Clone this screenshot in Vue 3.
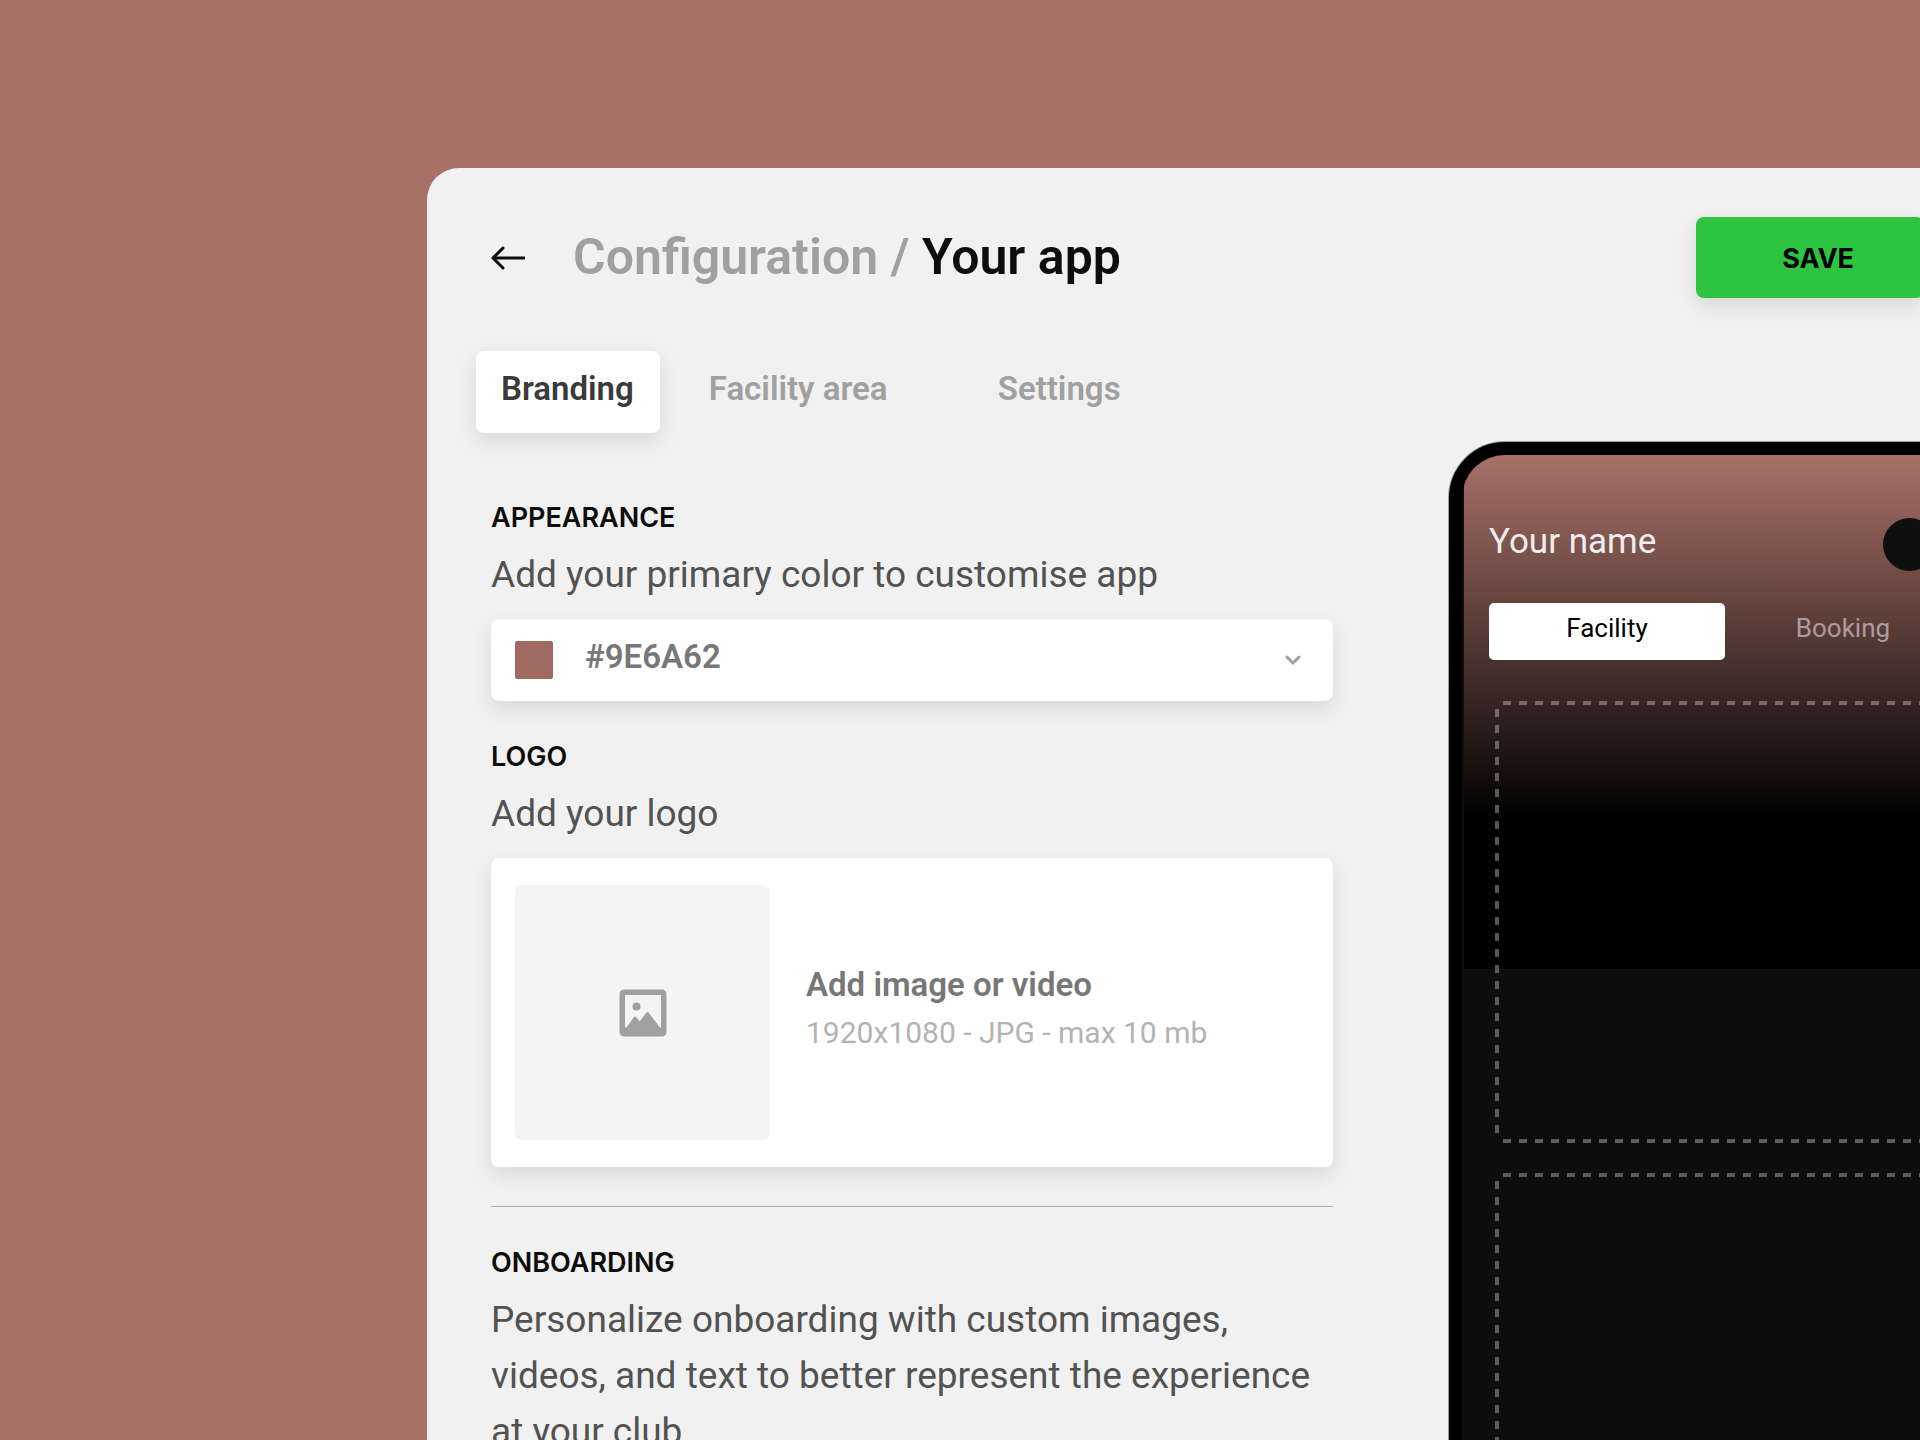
<script setup>
import { ref } from 'vue'

const tabs = [
  { id: 'branding', label: 'Branding' },
  { id: 'facility', label: 'Facility area' },
  { id: 'settings', label: 'Settings' },
]
const activeTab = ref('branding')

const previewTabs = ['Facility', 'Booking']
const activePreview = ref('Facility')

const color = ref('#9E6A62')
</script>

<template>
  <div class="page">
    <main class="panel">
      <header class="header">
        <button class="back" type="button" aria-label="Back">
          <svg viewBox="0 0 34 24" width="34" height="24" fill="none" stroke="#0d0d0d" stroke-width="3">
            <path d="M2 12H34" />
            <path d="M12 2 2 12l10 10" stroke-linecap="round" stroke-linejoin="round" />
          </svg>
        </button>
        <h1 class="title">
          <a href="#configuration">Configuration</a>
          <span class="slash"> / </span>
          <span>Your app</span>
        </h1>
        <button class="save" type="button">SAVE</button>
      </header>

      <div class="columns">
        <div class="form">
          <nav class="tabs">
            <button
              v-for="tab in tabs"
              :key="tab.id"
              type="button"
              class="tab"
              :class="[tab.id, { active: tab.id === activeTab }]"
              @click="activeTab = tab.id"
            >{{ tab.label }}</button>
          </nav>

          <section class="group">
            <h2>APPEARANCE</h2>
            <label class="text" for="color">Add your primary color to customise app</label>
            <div class="field card">
              <span class="swatch" :style="{ background: color }"></span>
              <select id="color" v-model="color">
                <option>#9E6A62</option>
              </select>
              <svg class="chevron" viewBox="0 0 16 10" width="16" height="10" fill="none" stroke="#9f9f9f" stroke-width="3" stroke-linecap="round" stroke-linejoin="round">
                <path d="M2 2l6 6 6-6" />
              </svg>
            </div>
          </section>

          <section class="group">
            <h2>LOGO</h2>
            <p class="text">Add your logo</p>
            <button class="upload card" type="button">
              <span class="thumb">
                <svg viewBox="0 0 48 48" width="48" height="48">
                  <path fill="#a0a0a0" fill-rule="evenodd" d="M5 0.500h38A4.500 4.500 0 0 1 47.500 5v38a4.500 4.500 0 0 1-4.500 4.500H5A4.500 4.500 0 0 1 .5 43V5A4.500 4.500 0 0 1 5 .5zM6 6v32.500h1.500L15 28q1-1 2 0l3.500 4.500 7-9q1-1 2 0L41 38.500h1V6z" />
                  <circle cx="17.500" cy="17.500" r="4" fill="#a0a0a0" />
                </svg>
              </span>
              <span class="hint">
                <strong>Add image or video</strong>
                <small>1920x1080 - JPG - max 10 mb</small>
              </span>
            </button>
          </section>

          <hr class="divider" />

          <section class="group">
            <h2>ONBOARDING</h2>
            <p class="text">Personalize onboarding with custom images, videos, and text to better represent the experience at your club</p>
          </section>
        </div>

        <aside class="phone">
          <div class="glow"></div>
          <div class="screen">
            <div class="profile">
              <span>Your name</span>
              <span class="avatar"></span>
            </div>
            <div class="switch">
              <button
                v-for="name in previewTabs"
                :key="name"
                type="button"
                :class="{ on: name === activePreview }"
                @click="activePreview = name"
              >{{ name }}</button>
            </div>
            <div class="slot"></div>
            <div class="slot"></div>
          </div>
        </aside>
      </div>
    </main>
  </div>
</template>

<style>
body {
  margin: 0;
}
</style>

<style scoped>
.page {
  box-sizing: border-box;
  height: 100vh;
  padding: 168px 0 0 427px;
  overflow: hidden;
  background: #a87168;
  font-family: Roboto, "Liberation Sans", sans-serif;
  color: #0d0d0d;
}

button {
  margin: 0;
  padding: 0;
  border: 0;
  background: none;
  color: inherit;
  font: inherit;
  text-align: left;
  cursor: pointer;
}

.panel {
  min-height: 100%;
  margin-right: -145px;
  padding: 49px 64px 0;
  box-sizing: border-box;
  border-radius: 32px 0 0 0;
  background: #f1f1f1;
}

.header {
  display: flex;
  align-items: center;
  height: 81px;
  margin-right: 77px;
}

.back {
  display: flex;
}

.title {
  flex: 1;
  margin: 0 0 0 48px;
  padding-bottom: 2px;
  font-size: 50px;
  line-height: 56px;
  font-weight: 600;
}

.title a,
.slash {
  color: #a0a0a0;
  text-decoration: none;
}

.save {
  height: 81px;
  padding: 2px 70px 0 86px;
  border-radius: 8px;
  background: #2ec440;
  box-shadow: 0 8px 20px rgba(0, 0, 0, 0.1);
  color: #000;
  font: 700 27px/32px Inter, "Liberation Sans", sans-serif;
}

.columns {
  display: grid;
  grid-template-columns: minmax(0, 842fr) minmax(0, 552fr);
  column-gap: 116px;
  align-items: start;
  margin-top: 53px;
}

.tabs {
  display: flex;
  gap: 24px;
  margin: 0 0 68px -15px;
}

.tab {
  padding: 18px 26px 24px 25px;
  border-radius: 8px;
  color: #a0a0a0;
  font-size: 33px;
  line-height: 40px;
  font-weight: 600;
}

.tab.facility {
  min-width: 265px;
}

.tab.active {
  background: #fff;
  box-shadow: 0 8px 20px rgba(0, 0, 0, 0.1);
  color: #3a3a3a;
}

.group {
  margin-bottom: 39px;
}

h2 {
  margin: 0 0 13px;
  padding-top: 1px;
  font: 600 27px/32px Inter, "Liberation Sans", sans-serif;
}

.text {
  display: block;
  margin: 0 0 16px;
  color: #525252;
  font-size: 37px;
  line-height: 56px;
}

.card {
  box-sizing: border-box;
  width: 100%;
  border-radius: 8px;
  background: #fff;
  box-shadow: 0 8px 20px rgba(0, 0, 0, 0.1);
}

.field {
  display: flex;
  align-items: center;
  height: 82px;
  padding: 0 32px 0 24px;
}

.swatch {
  width: 38px;
  height: 38px;
  border-radius: 2px;
}

.field select {
  flex: 1;
  height: 82px;
  margin: 0 -16px 0 0;
  padding: 0 0 6px 32px;
  border: 0;
  appearance: none;
  background: none;
  color: #777;
  font: 600 33px/40px Roboto, "Liberation Sans", sans-serif;
}

.chevron {
  pointer-events: none;
}

.upload {
  display: flex;
  align-items: center;
  gap: 36px;
  padding: 27px 24px;
}

.thumb {
  display: flex;
  align-items: center;
  justify-content: center;
  width: 255px;
  height: 255px;
  border-radius: 7px;
  background: #f4f4f4;
}

.hint {
  display: flex;
  flex-direction: column;
  gap: 8px;
  padding-bottom: 7px;
  line-height: 40px;
}

.hint strong {
  color: #777;
  font-size: 33px;
  font-weight: 600;
}

.hint small {
  color: #b3b3b3;
  font-size: 30px;
}

.divider {
  height: 1px;
  margin: 0 0 39px;
  border: 0;
  background: #aaa;
}

.phone {
  display: grid;
  margin-top: 91px;
  overflow: hidden;
  border: 13px solid #000;
  border-radius: 56px 56px 0 0;
  background: #0d0d0d;
  box-shadow: 0 0 0 1px #999;
}

.glow,
.screen {
  grid-area: 1 / 1;
}

.glow {
  height: 514px;
  margin: 0 2px;
  background: linear-gradient(#a87168, #000 71%);
}

.screen {
  padding: 63px 27px 60px;
}

.profile {
  display: flex;
  justify-content: space-between;
  align-items: flex-start;
  padding-right: 25px;
  color: #eee;
  font-size: 35px;
  line-height: 48px;
}

.avatar {
  width: 53px;
  height: 53px;
  border-radius: 50%;
  background: #0f0f0f;
}

.switch {
  display: flex;
  margin: 32px 0 41px;
}

.switch button {
  flex: 1;
  padding: 11px 0 18px;
  border-radius: 5px;
  color: rgba(255, 255, 255, 0.5);
  font-size: 26px;
  line-height: 28px;
  text-align: center;
}

.switch .on {
  background: #fff;
  color: #000;
}

.slot {
  --dash: rgba(255, 255, 255, 0.33);
  height: 442px;
  margin: 0 6px 30px;
  background:
    repeating-linear-gradient(90deg, var(--dash) 0 8px, transparent 8px 16px) 8px 0 / calc(100% - 16px) 4px,
    repeating-linear-gradient(90deg, var(--dash) 0 8px, transparent 8px 16px) 8px 100% / calc(100% - 16px) 4px,
    repeating-linear-gradient(var(--dash) 0 8px, transparent 8px 16px) 0 8px / 4px calc(100% - 16px),
    repeating-linear-gradient(var(--dash) 0 8px, transparent 8px 16px) 100% 8px / 4px calc(100% - 16px);
  background-repeat: no-repeat;
}
</style>
